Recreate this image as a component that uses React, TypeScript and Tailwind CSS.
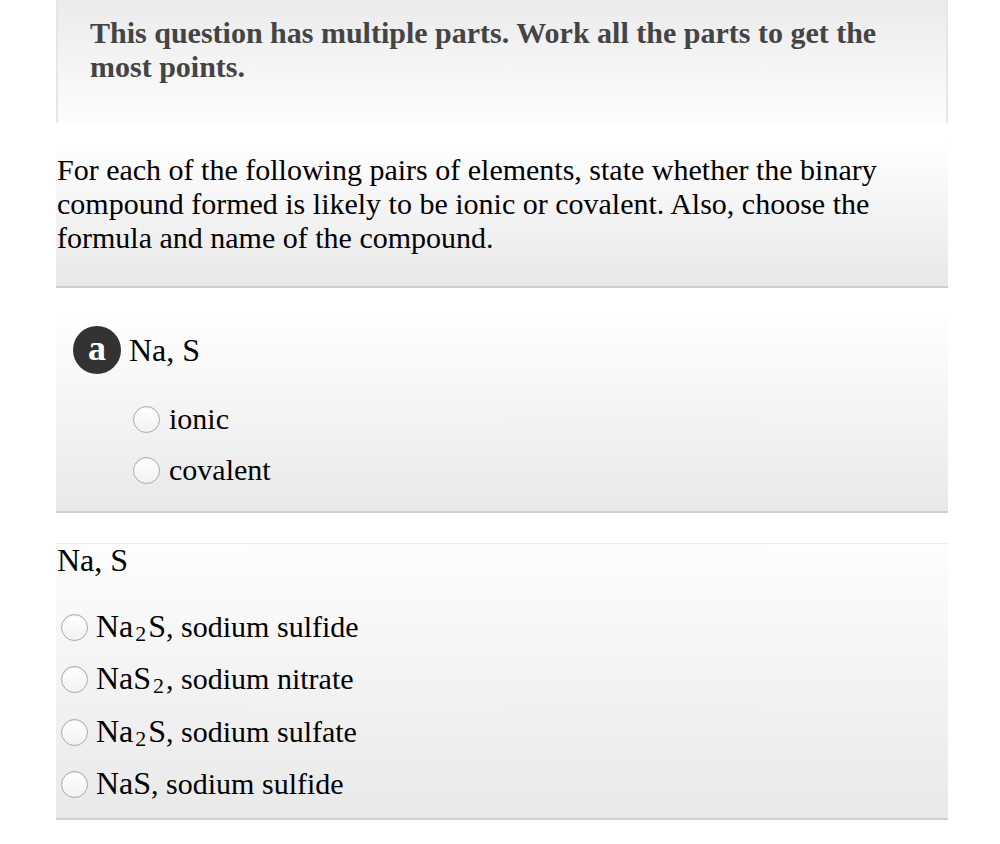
import React from 'react';

const serif = "font-['Liberation_Serif','Times_New_Roman',serif]";

const Radio: React.FC = () => (
  <span className="inline-block w-[27px] h-[27px] shrink-0 rounded-full border border-[#a9a9a9] bg-[linear-gradient(to_bottom,#ffffff,#f2f2f2)] shadow-[inset_0_1px_1px_rgba(0,0,0,0.08)]"></span>
);

const Sub: React.FC<{ children: React.ReactNode }> = ({ children }) => (
  <sub className="text-[22px] leading-none relative top-[4px] align-baseline mx-[2px]">{children}</sub>
);

const App: React.FC = () => {
  const compounds: { formula: React.ReactNode; name: string }[] = [
    { formula: <>Na<Sub>2</Sub>S</>, name: 'sodium sulfide' },
    { formula: <>NaS<Sub>2</Sub></>, name: 'sodium nitrate' },
    { formula: <>Na<Sub>2</Sub>S</>, name: 'sodium sulfate' },
    { formula: <>NaS</>, name: 'sodium sulfide' },
  ];

  return (
    <div className={`min-h-[844px] bg-white ${serif} text-[30px] leading-[34px]`}>
      <div className="ml-[56px] w-[892px]">
        {/* instructions */}
        <div className="border-x-2 border-[#e6e6e6] bg-[linear-gradient(to_bottom,#ebebeb,#fdfdfd)] pl-[32px] pr-[30px] pt-[16px] pb-[39px]">
          <p className="font-bold text-[#444444]">
            This question has multiple parts. Work all the parts to get the most points.
          </p>
        </div>

        {/* prompt */}
        <div className="mt-[17px] bg-[linear-gradient(to_bottom,#ffffff,#e8e8e8)] border-b-2 border-[#cfcfcf] pt-[13px] pb-[31px] pr-[40px]">
          <p className="text-black pl-[1px]">
            For each of the following pairs of elements, state whether the binary compound formed is likely to be ionic or covalent. Also, choose the formula and name of the compound.
          </p>
        </div>

        {/* part a */}
        <div className="mt-[22px] bg-[linear-gradient(to_bottom,#ffffff,#e9e9e9)] border-b-2 border-[#cfcfcf] pt-[16px] pb-[15px]">
          <div className="flex items-center gap-[8px] pl-[17px]">
            <span className="flex h-[48px] w-[48px] items-center justify-center rounded-full bg-[#333333] text-white font-bold text-[36px] pb-[4px]">a</span>
            <span className="text-black text-[32px]">Na, S</span>
          </div>
          <div className="mt-[20px] pl-[77px] flex flex-col">
            {['ionic', 'covalent'].map((o) => (
              <label key={o} className="flex items-center gap-[9px] h-[51px] text-black">
                <Radio />
                <span className="pb-[2px]">{o}</span>
              </label>
            ))}
          </div>
        </div>

        {/* formula choices */}
        <div className="mt-[30px] border-t border-[#ebebeb] bg-[linear-gradient(to_bottom,#fdfdfd,#e9e9e9)] border-b-2 border-b-[#cfcfcf] pb-[7px]">
          <p className="text-black pl-[1px] leading-[32px] text-[32px]">Na, S</p>
          <div className="mt-[25px] pl-[5px] flex flex-col">
            {compounds.map((c, i) => (
              <label key={i} className="flex items-center gap-[8px] h-[52.5px] text-black">
                <Radio />
                <span className="pb-[2px]">
                  <span className="text-[32px]">{c.formula}</span>, {c.name}
                </span>
              </label>
            ))}
          </div>
        </div>
      </div>
    </div>
  );
};

export default App;
